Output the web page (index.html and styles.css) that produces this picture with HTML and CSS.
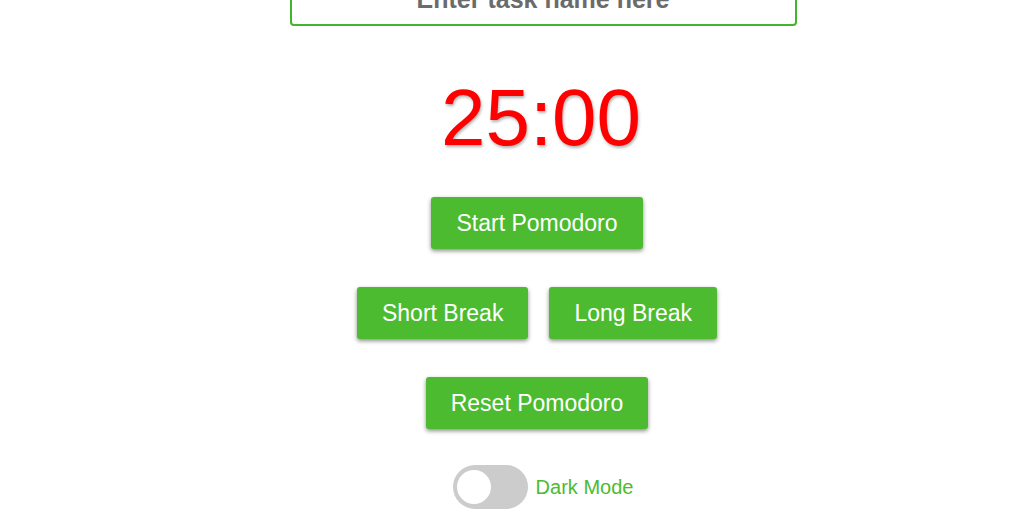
FILE: index.html
```html
<!DOCTYPE html>
<html lang="en">
<head>
    <meta charset="UTF-8">
    <meta name="viewport" content="width=device-width, initial-scale=1.0">
    <title>Pomodoro Timer</title>
    <link rel="stylesheet" href="styles.css">
</head>
<body>
    <div class="pomodoro">
        <input class="task-input" type="text" placeholder="Enter task name here">

        <div class="timer" id="timer">25:00</div>

        <div class="row">
            <button class="btn">Start Pomodoro</button>
        </div>
        <div class="row">
            <button class="btn">Short Break</button>
            <button class="btn">Long Break</button>
        </div>
        <div class="row">
            <button class="btn">Reset Pomodoro</button>
        </div>

        <label class="theme">
            <span class="switch"><span class="knob"></span></span>
            <span class="theme-label">Dark Mode</span>
        </label>
    </div>
</body>
</html>
```

FILE: styles.css
```css
body {
    font-family: "Liberation Sans", Arial, sans-serif;
    background-color: #ffffff;
    margin: 0;
    padding-left: 50px;
    overflow: hidden;
}

/* conteiner principal */
.pomodoro {
    display: flex;
    flex-direction: column;
    align-items: center;
    margin-top: -28px;
}

.task-input {
    box-sizing: border-box;
    width: 507px;
    height: 54px;
    margin-left: 12px;
    border: 2px solid #43b52a;
    border-radius: 4px;
    font-family: inherit;
    font-size: 25px;
    font-weight: bold;
    text-align: center;
    outline: none;
}

.task-input::placeholder {
    color: #6b6b6b;
}

.timer {
    margin-top: 46px;
    margin-left: 8px;
    font-size: 80px;
    line-height: 92px;
    color: #ff0000;
    text-shadow: 1px 2px 3px rgba(0, 0, 0, 0.3);
}

.row {
    display: flex;
    gap: 21px;
    margin-top: 38px;
}

.timer + .row {
    margin-top: 33px;
}

.btn {
    box-sizing: border-box;
    height: 52px;
    background-color: #4cbb2f;
    color: #ffffff;
    border: none;
    border-radius: 3px;
    padding: 0 25px;
    font-family: inherit;
    font-size: 23px;
    line-height: 52px;
    box-shadow: 0 2px 4px rgba(0, 0, 0, 0.45);
    cursor: pointer;
}

.btn:hover {
    background-color: #43a829;
}

/* interruptor modo escuro */
.theme {
    display: flex;
    align-items: center;
    gap: 8px;
    margin-top: 36px;
    margin-left: 12px;
    cursor: pointer;
}

.switch {
    display: flex;
    align-items: center;
    box-sizing: border-box;
    width: 75px;
    height: 44px;
    padding: 0 4px;
    border-radius: 22px;
    background-color: #cccccc;
}

.knob {
    width: 34px;
    height: 34px;
    border-radius: 50%;
    background-color: #ffffff;
}

.theme-label {
    font-size: 20px;
    color: #4cbb2f;
}
```
